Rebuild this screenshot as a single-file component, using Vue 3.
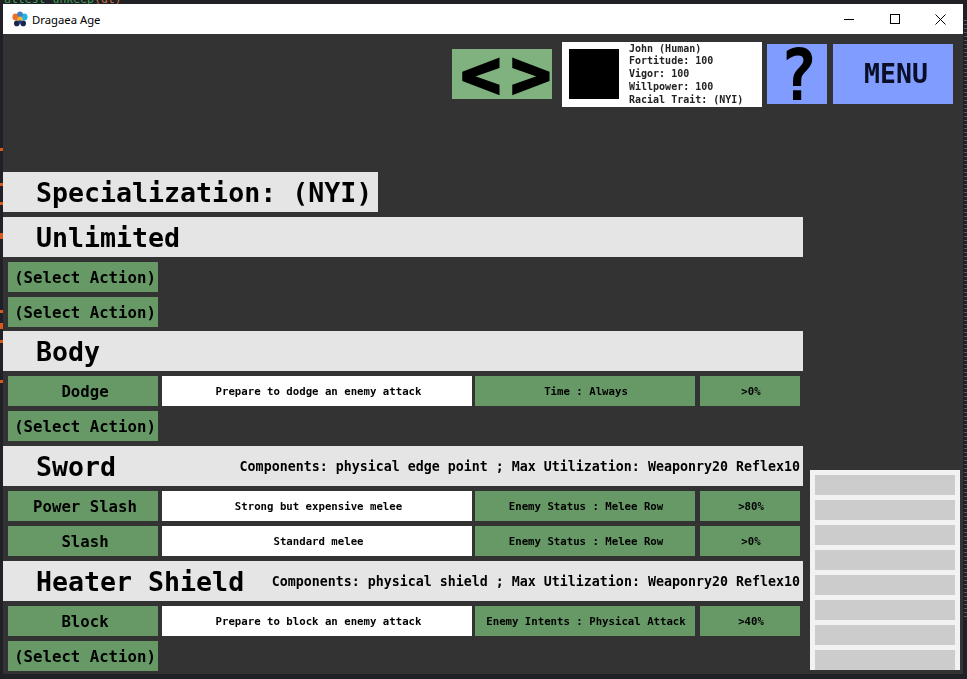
<script setup>
const ticks = [148, 183, 202, 233, 236, 310, 323, 326, 340, 380]
const sidebarSlots = 8
const sections = [
  { name: 'Unlimited', rows: [{ action: '(Select Action)' }, { action: '(Select Action)' }] },
  {
    name: 'Body',
    tight: true,
    rows: [
      { action: 'Dodge', desc: 'Prepare to dodge an enemy attack', cond: 'Time : Always', pct: '>0%' },
      { action: '(Select Action)' }
    ]
  },
  {
    name: 'Sword',
    note: 'Components: physical edge point ; Max Utilization: Weaponry20 Reflex10',
    rows: [
      { action: 'Power Slash', desc: 'Strong but expensive melee', cond: 'Enemy Status : Melee Row', pct: '>80%' },
      { action: 'Slash', desc: 'Standard melee', cond: 'Enemy Status : Melee Row', pct: '>0%' }
    ]
  },
  {
    name: 'Heater Shield',
    note: 'Components: physical shield ; Max Utilization: Weaponry20 Reflex10',
    rows: [
      { action: 'Block', desc: 'Prepare to block an enemy attack', cond: 'Enemy Intents : Physical Attack', pct: '>40%' },
      { action: '(Select Action)' }
    ]
  }
]
</script>

<template>
  <div class="desktop">
    <span v-for="t in ticks" :key="t" class="tick" :style="{ top: t + 'px' }"></span>
    <div class="code-strip"><span class="code-green">attest unkeep</span><span class="code-orange">(dt)</span></div>
    <div class="window">
      <div class="titlebar">
        <svg class="app-icon" width="16" height="16" viewBox="0 0 16 16">
          <circle cx="3.8" cy="6" r="3.4" fill="#f0702a" />
          <circle cx="12.2" cy="6" r="3.4" fill="#25b4e8" />
          <circle cx="8" cy="3.2" r="2.8" fill="#3f7fc0" />
          <circle cx="8" cy="8" r="2.6" fill="#f2b632" />
          <circle cx="4.8" cy="12.4" r="2.8" fill="#16264f" />
          <circle cx="11.2" cy="12.4" r="2.8" fill="#16264f" />
          <circle cx="8" cy="11" r="1.8" fill="#1d3a78" />
        </svg>
        <span class="app-title">Dragaea Age</span>
        <div class="win-controls">
          <svg class="win-btn" width="10" height="10" viewBox="0 0 10 10"><path d="M0 5.5H10" stroke="#000" fill="none" /></svg>
          <svg class="win-btn" width="10" height="10" viewBox="0 0 10 10"><rect x="0.5" y="0.5" width="9" height="9" stroke="#000" fill="none" /></svg>
          <svg class="win-btn" width="11" height="11" viewBox="0 0 11 11"><path d="M0.5 0.5L10.5 10.5M10.5 0.5L0.5 10.5" stroke="#000" fill="none" /></svg>
        </div>
      </div>
      <div class="canvas">
        <div class="header">
          <div class="nav"><span class="soft">&lt;</span><span class="soft">&gt;</span></div>
          <div class="char">
            <div class="portrait"></div>
            <div class="stats soft">
              <div>John (Human)</div>
              <div>Fortitude: 100</div>
              <div>Vigor: 100</div>
              <div>Willpower: 100</div>
              <div>Racial Trait: (NYI)</div>
            </div>
          </div>
          <div class="help"><span class="soft">?</span></div>
          <div class="menu"><span class="soft">MENU</span></div>
        </div>
        <div class="main">
          <div class="band spec"><span class="band-title soft">Specialization: (NYI)</span></div>
          <template v-for="s in sections" :key="s.name">
            <div class="band" :class="{ tight: s.tight }">
              <span class="band-title soft">{{ s.name }}</span>
              <span v-if="s.note" class="band-note soft">{{ s.note }}</span>
            </div>
            <div v-for="(r, i) in s.rows" :key="i" class="row">
              <div class="cell action"><span class="soft">{{ r.action }}</span></div>
              <template v-if="r.desc">
                <div class="cell desc"><span class="soft">{{ r.desc }}</span></div>
                <div class="cell cond"><span class="soft">{{ r.cond }}</span></div>
                <div class="cell pct"><span class="soft">{{ r.pct }}</span></div>
              </template>
            </div>
          </template>
        </div>
        <div class="sidebar">
          <div v-for="n in sidebarSlots" :key="n" class="slot"></div>
        </div>
      </div>
    </div>
  </div>
</template>

<style>
html, body { margin: 0; background: #1f2126; }
</style>

<style scoped>
.desktop {
  position: relative;
  width: 967px;
  height: 679px;
  box-sizing: border-box;
  padding: 0 4px 5px 3px;
  overflow: hidden;
  display: flex;
  flex-direction: column;
  background:
    repeating-linear-gradient(#5a5e64 0 1px, transparent 1px 4px) right 20px / 3px 600px no-repeat,
    #1f2126;
  font-family: "DejaVu Sans Mono", monospace;
  font-weight: 700;
  color: #000;
}
.soft { display: block; filter: blur(0.35px); }
.tick {
  position: absolute;
  left: 0;
  width: 3px;
  height: 3px;
  background: #d9581c;
}
.code-strip {
  height: 4px;
  flex: none;
  overflow: hidden;
  font-size: 11.5px;
  line-height: 12px;
  font-weight: 400;
  white-space: pre;
  padding-left: 1px;
}
.code-green, .code-orange { position: relative; top: -7px; }
.code-green { color: #3f9f4f; }
.code-orange { color: #c8703a; }
.window {
  flex: 1;
  display: flex;
  flex-direction: column;
  min-height: 0;
  background: #333;
}
.titlebar {
  flex: none;
  height: 30px;
  background: #fff;
  display: flex;
  align-items: center;
  padding-left: 9px;
}
.app-icon { flex: none; margin-right: 4px; }
.app-title {
  font: 400 11.3px "Noto Sans", "Open Sans", sans-serif;
  color: #000;
}
.win-controls {
  margin-left: auto;
  display: flex;
  align-items: center;
}
.win-btn { margin: 0 18px; }
.win-controls .win-btn:last-child { margin: 0 17px 0 17px; }
.canvas {
  flex: 1;
  min-height: 0;
  display: grid;
  grid-template-columns: 807px 1fr;
  grid-template-rows: 80px 1fr;
}
.header {
  grid-column: 1 / 3;
  display: flex;
  justify-content: flex-end;
  align-items: center;
  padding-right: 10px;
}
.nav {
  width: 100px;
  height: 50px;
  box-sizing: border-box;
  padding-left: 7px;
  background: #80b280;
  display: flex;
  align-items: center;
  justify-content: center;
  font-size: 72px;
  line-height: 50px;
  margin-right: 10px;
  -webkit-text-stroke: 2.5px #000;
}
.nav span { width: 50px; flex: none; text-align: center; transform: scale(.94, .92); }
.char {
  width: 200px;
  height: 65px;
  background: #fff;
  display: flex;
  align-items: center;
  padding-left: 7px;
  box-sizing: border-box;
  margin-right: 5px;
}
.portrait { width: 50px; height: 50px; background: #000; flex: none; margin-right: 10px; }
.stats { font-size: 10px; line-height: 12.7px; color: #222; white-space: pre; margin-top: 1px; }
.help {
  width: 60px;
  height: 60px;
  box-sizing: border-box;
  padding-left: 3px;
  background: #809cff;
  margin-right: 6px;
  font-size: 74px;
  line-height: 60px;
  text-align: center;
}
.help span { transform: translateY(1px) scale(.85, .96); }
.menu {
  width: 120px;
  height: 60px;
  background: #809cff;
  font-size: 26.5px;
  line-height: 60px;
  text-align: center;
  color: #0a0f28;
  padding-left: 6px;
  box-sizing: border-box;
}
.main {
  grid-column: 1;
  padding-top: 58px;
  display: flex;
  flex-direction: column;
  gap: 5px;
  min-height: 0;
}
.band {
  width: 800px;
  height: 40px;
  flex: none;
  box-sizing: border-box;
  background: #e5e5e5;
  display: flex;
  justify-content: space-between;
  align-items: center;
  padding: 0 3px 0 33px;
  white-space: pre;
}
.band.spec { width: 375px; }
.band.tight { margin-top: -1px; }
.band-title { font-size: 26.6px; }
.band-note { font-size: 13.3px; }
.row {
  display: flex;
  height: 30px;
  flex: none;
  padding-left: 5px;
}
.cell {
  height: 30px;
  box-sizing: border-box;
  display: flex;
  align-items: center;
  justify-content: center;
  white-space: pre;
  background: #669966;
}
.action { width: 150px; font-size: 15.7px; margin-right: 4px; padding-left: 4px; }
.desc { width: 310px; background: #fff; font-size: 10.7px; margin-right: 3px; padding-left: 3px; }
.cond { width: 220px; font-size: 10.7px; margin-right: 5px; padding-left: 2px; }
.pct { width: 100px; font-size: 10.7px; padding-left: 2px; }
.sidebar {
  grid-column: 2;
  align-self: end;
  margin: 0 3px 4px 0;
  height: 200px;
  box-sizing: border-box;
  overflow: hidden;
  background: #f2f2f2;
  padding: 5px 5px 0;
  display: flex;
  flex-direction: column;
  gap: 5px;
}
.slot { height: 20px; flex: none; background: #ccc; }
</style>
